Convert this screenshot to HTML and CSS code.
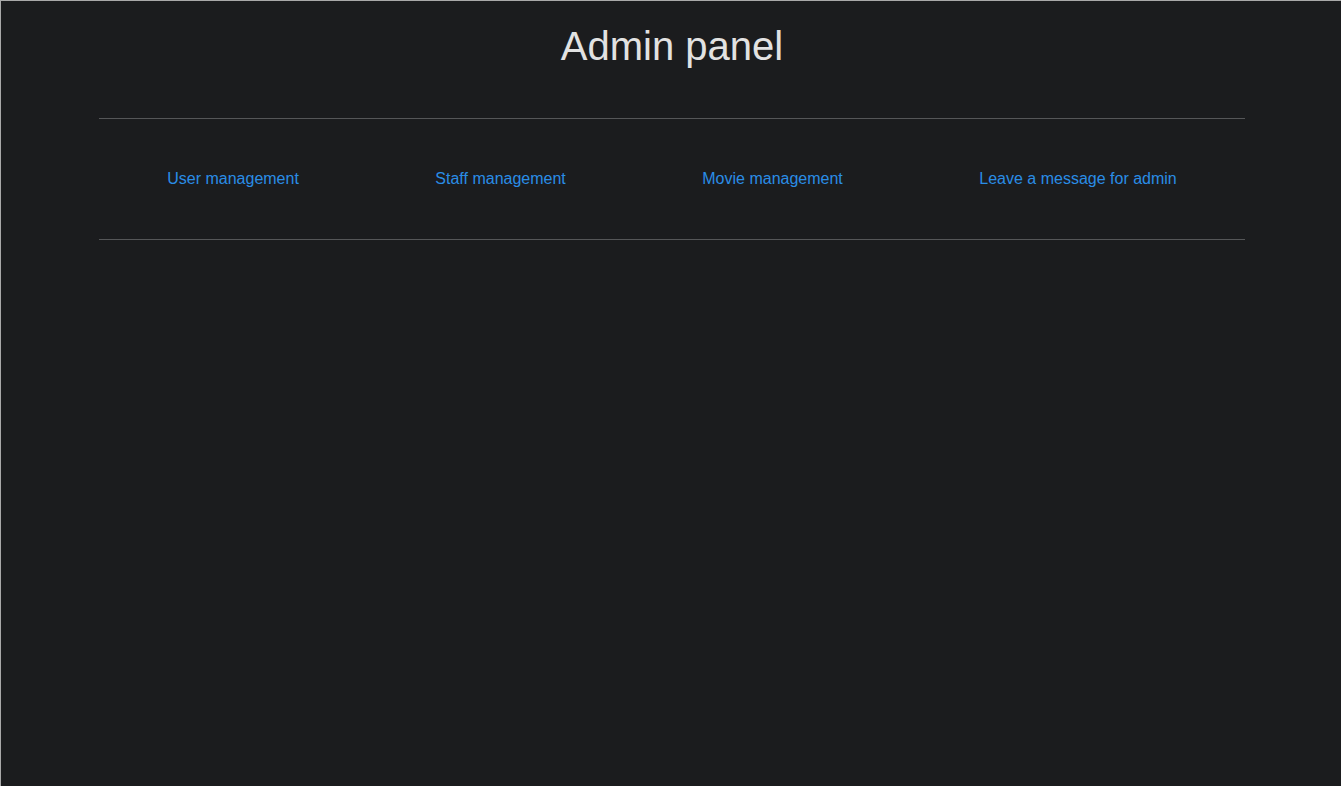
FILE: index.html
```html
<!DOCTYPE html>
<html lang="en">
<head>
<meta charset="utf-8">
<title>Admin panel</title>
<link rel="stylesheet" href="styles.css">
</head>
<body>
<div class="page">
  <h1 class="title">Admin panel</h1>
  <nav class="menu">
    <a class="menu-link" href="#">User management</a>
    <a class="menu-link" href="#">Staff management</a>
    <a class="menu-link" href="#">Movie management</a>
    <a class="menu-link" href="#">Leave a message for admin</a>
  </nav>
</div>
</body>
</html>
```
FILE: styles.css
```css
html, body {
  margin: 0;
  padding: 0;
  height: 100%;
}
body {
  background: #1b1c1e;
  border-top: 1px solid #a9a9a9;
  border-left: 1px solid #a9a9a9;
  box-sizing: border-box;
  font-family: "Liberation Sans", Arial, sans-serif;
}
.page {
  margin: 0 96px 0 98px;
}
.title {
  margin: 0;
  padding-top: 22px;
  height: 117px;
  box-sizing: border-box;
  text-align: center;
  font-size: 40px;
  font-weight: normal;
  line-height: 46px;
  color: #e2e2e2;
}
.menu {
  display: flex;
  justify-content: space-around;
  align-items: center;
  height: 120px;
  border-top: 1px solid #555658;
  border-bottom: 1px solid #555658;
}
.menu-link {
  font-size: 16px;
  line-height: 18px;
  color: #2a8de6;
  text-decoration: none;
}
```
